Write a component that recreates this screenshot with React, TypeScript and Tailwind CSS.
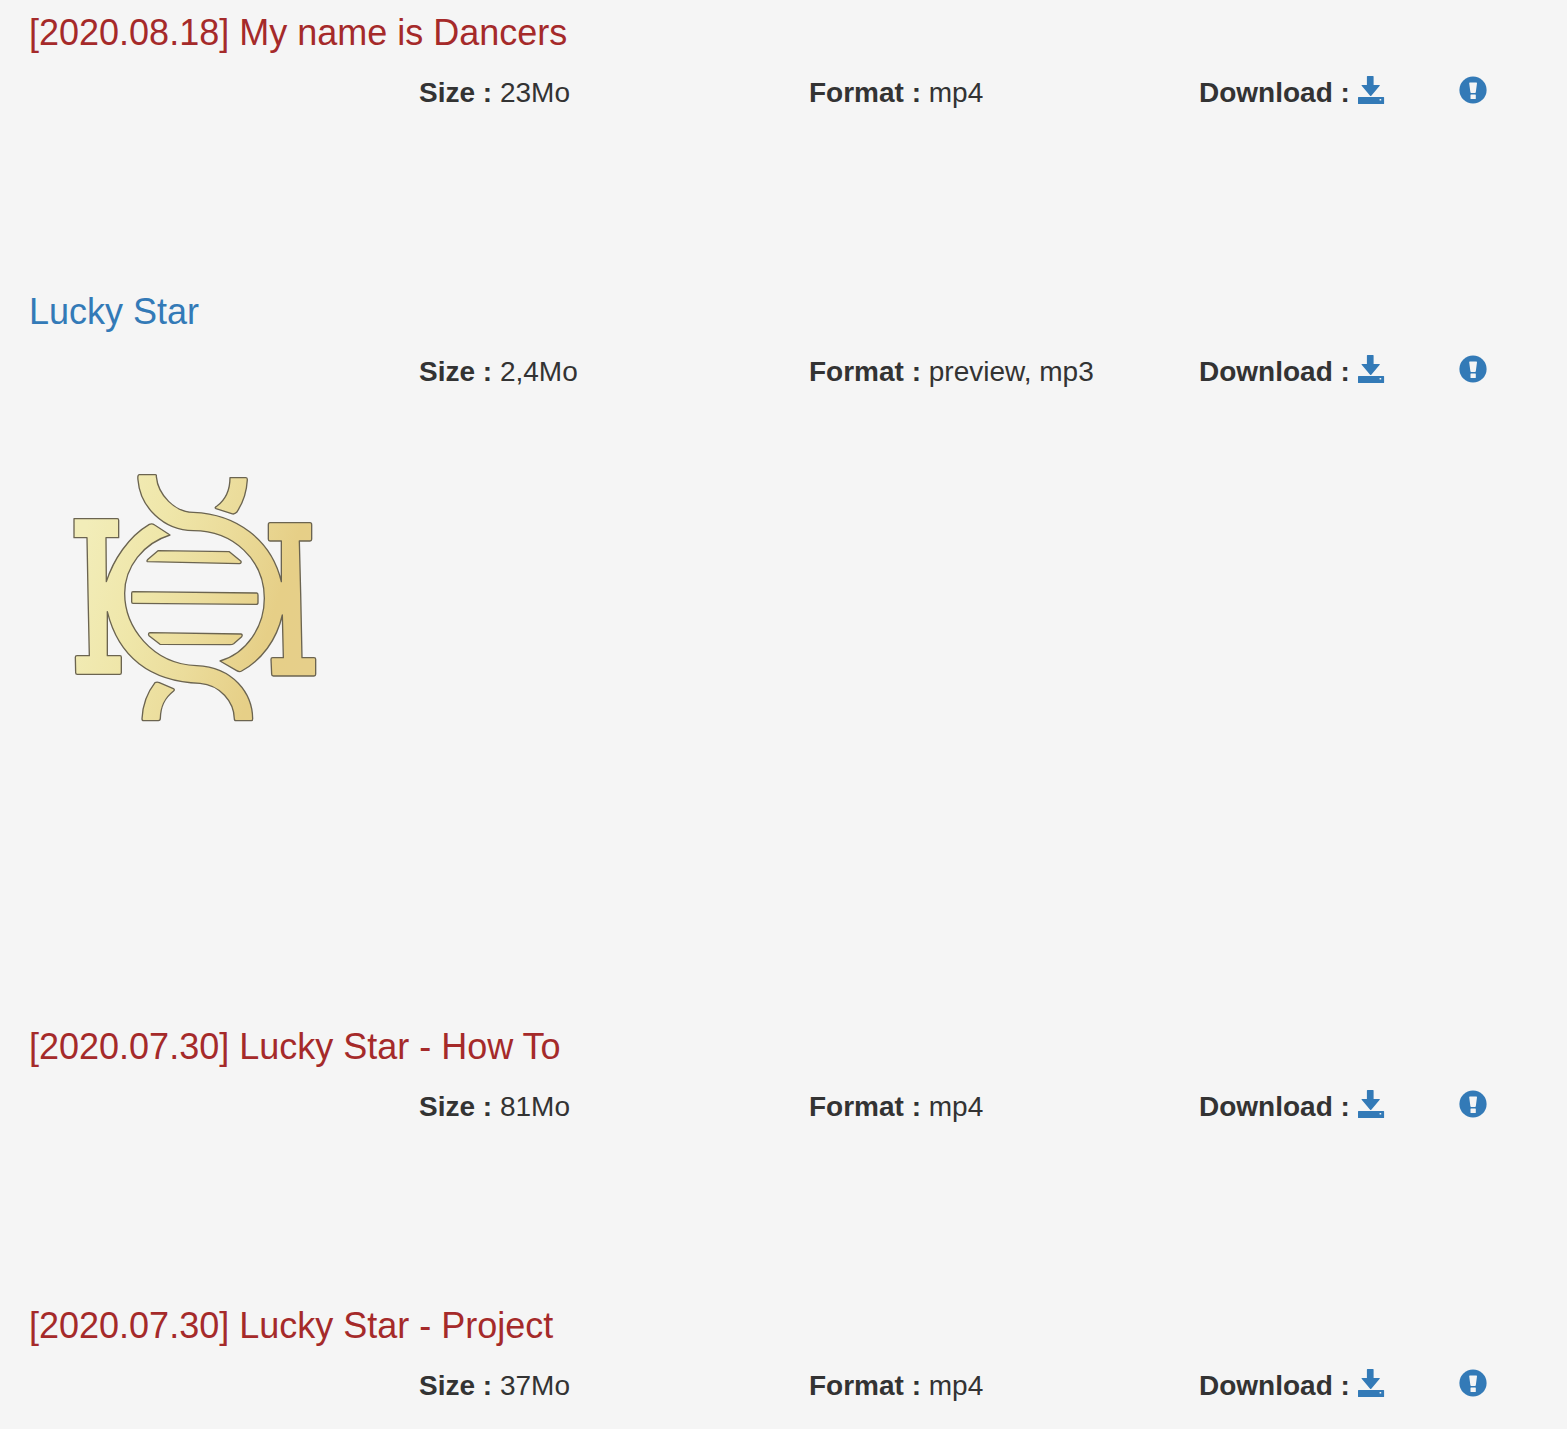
import type { ReactElement, ReactNode } from "react";

type Release = {
  readonly title: string;
  readonly size: string;
  readonly format: string;
  readonly kind: "video" | "album";
};

const releases: readonly Release[] = [
  {
    title: "[2020.08.18] My name is Dancers",
    size: "23Mo",
    format: "mp4",
    kind: "video",
  },
  {
    title: "Lucky Star",
    size: "2,4Mo",
    format: "preview, mp3",
    kind: "album",
  },
  {
    title: "[2020.07.30] Lucky Star - How To",
    size: "81Mo",
    format: "mp4",
    kind: "video",
  },
  {
    title: "[2020.07.30] Lucky Star - Project",
    size: "37Mo",
    format: "mp4",
    kind: "video",
  },
];

export default function App(): ReactElement {
  return (
    <main className="min-h-screen overflow-x-hidden bg-[#f5f5f5] pt-[13px] font-['Liberation_Sans',Arial,sans-serif] text-[28px] leading-10 text-[#333333]">
      {releases.map((release) => (
        <ReleaseItem key={release.title} release={release} />
      ))}
    </main>
  );
}

type ReleaseItemProps = {
  readonly release: Release;
};

function ReleaseItem({ release }: ReleaseItemProps): ReactElement {
  const isAlbum = release.kind === "album";

  return (
    <article
      className={isAlbum ? "pb-[297px] last:pb-0" : "pb-[179px] last:pb-0"}
    >
      <h2 className="mb-5 pl-[29px] text-4xl leading-10 text-[#a52a2a]">
        {isAlbum ? (
          <a className="text-[#337ab7]" href="#lucky-star">
            {release.title}
          </a>
        ) : (
          release.title
        )}
      </h2>
      <div className="mr-2 -ml-px grid h-10 grid-cols-12">
        <Field className="col-span-3 col-start-4" label="Size :">
          {release.size}
        </Field>
        <Field className="col-span-3" label="Format :">
          {release.format}
        </Field>
        <Field className="col-span-2" label="Download :">
          <a
            className="text-[#337ab7]"
            href="#download"
            aria-label={`Download ${release.title}`}
          >
            <DownloadIcon />
          </a>
        </Field>
        <div className="pl-[30px]">
          <button
            className="block cursor-pointer pt-[3px] text-[#337ab7]"
            type="button"
            aria-label={`Report ${release.title}`}
          >
            <ExclamationIcon />
          </button>
        </div>
      </div>
      {isAlbum && <Emblem />}
    </article>
  );
}

type FieldProps = {
  readonly label: string;
  readonly children: ReactNode;
  readonly className: string;
};

function Field({ label, children, className }: FieldProps): ReactElement {
  return (
    <div className={`${className} pl-[30px] whitespace-nowrap`}>
      <strong className="font-bold">{label}</strong> {children}
    </div>
  );
}

function DownloadIcon(): ReactElement {
  return (
    <svg
      className="inline-block size-7 align-[-2px]"
      viewBox="0 0 28 28"
      fill="currentColor"
      aria-hidden="true"
    >
      <path d="M9.500 0h5.500q.6 0 .6.600V9h5.700q1 0 .4.800l-8.400 9.900q-.6.600-1.200 0L3.700 9.800Q3 9 4 9h4.900V.6Q8.900 0 9.500 0z" />
      <path
        fillRule="evenodd"
        d="M.6 21h24.900q.6 0 .6.600v5.800q0 .6-.6.600H.6q-.6 0-.6-.600v-5.800Q0 21 .6 21zM21.600 23v1.600h1.600V23z"
      />
    </svg>
  );
}

function ExclamationIcon(): ReactElement {
  return (
    <svg className="size-7" viewBox="0 0 28 28" aria-hidden="true">
      <circle cx="14" cy="14" r="13.6" fill="currentColor" />
      <path
        d="M10.900 6.500h6.400q.8 0 .7.800l-1.200 8.900q-.1.700-.8.700h-3.800q-.7 0-.8-.7l-1.200-8.900q-.1-.8.700-.8zM12 18.500h4.300q.5 0 .5.500v3.500q0 .5-.5.500H12q-.5 0-.5-.5V19q0-.5.500-.5z"
        fill="#f5f5f5"
      />
    </svg>
  );
}

function Emblem(): ReactElement {
  return (
    <svg
      className="mt-[68px] ml-[60px] size-[270px]"
      viewBox="0 0 810 810"
      role="img"
      aria-label="Golden emblem"
    >
      <defs>
        <linearGradient
          id="gold"
          gradientUnits="userSpaceOnUse"
          x1="45"
          y1="300"
          x2="765"
          y2="520"
        >
          <stop offset="0" stopColor="#f2edb9" />
          <stop offset="0.3" stopColor="#efe6a9" />
          <stop offset="0.55" stopColor="#ebdc9b" />
          <stop offset="0.82" stopColor="#e6cf87" />
          <stop offset="1" stopColor="#e6cf8a" />
        </linearGradient>
      </defs>
      <g
        fill="url(#gold)"
        stroke="#6b6450"
        strokeWidth="4"
        strokeLinejoin="round"
      >
        {/* left pillar with the lower strand */}
        <path d="M42 176H172Q176 176 176 181V233H138L139 365C160 300 205 230 268 193Q276 189 284 195L330 225C250 250 194 320 194 400C194 500 275 612 410 617C520 622 577 700 578 776Q578 782 574 782H528Q523 782 523 776C522 725 480 675 420 670C270 665 175 590 142 455V587H180Q184 587 184 592V638Q184 643 179 643H52Q47 643 47 638L46 592Q46 587 51 587H88L84 400L81 233H42Z" />
        {/* right pillar with the upper strand */}
        <path d="M238 44H286Q290 44 289 50C294 105 345 157 400 157C530 162 635 240 664 365V243H630Q625 243 625 238V194Q625 188 630 188H750Q755 188 755 194V238Q755 243 750 243H718L722 400L726 593H762Q767 593 767 598V643Q767 648 762 648H640Q635 648 635 643L633 598Q633 593 638 593H670L667 465C650 540 605 600 545 633Q538 637 530 632L480 603C560 580 613 500 613 415C613 300 520 212 400 212C310 212 240 140 234 60Q232 44 238 44Z" />
        {/* loose strand ends */}
        <path d="M510 53H558Q562 53 562 59C560 95 548 130 530 157Q523 164 515 161L468 146Q462 143 470 139C498 118 510 90 510 53Z" />
        <path d="M285 668Q291 665 298 668L340 686Q346 689 340 694C312 716 302 740 301 775Q301 782 295 782H251Q246 782 246 776C248 735 260 700 285 668Z" />
        {/* rungs */}
        <path d="M294 272L508 275L543 304Q545 310 538 311L262 305Q259 303 264 298Z" />
        <path d="M219 395L590 399Q594 399 594 405V428Q594 433 588 433L219 430Q215 430 215 425V400Q215 395 219 395Z" />
        <path d="M270 518L543 522Q549 523 545 530L521 551Q517 554 510 554L300 553L267 527Q263 520 270 518Z" />
      </g>
    </svg>
  );
}
